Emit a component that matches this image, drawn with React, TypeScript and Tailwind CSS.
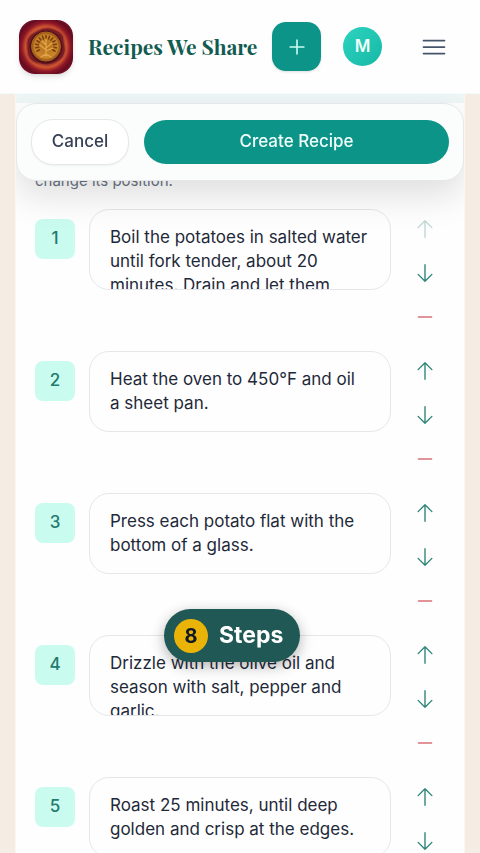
const steps = [
  "Boil the potatoes in salted water until fork tender, about 20 minutes. Drain and let them",
  "Heat the oven to 450°F and oil a sheet pan.",
  "Press each potato flat with the bottom of a glass.",
  "Drizzle with the olive oil and season with salt, pepper and garlic.",
  "Roast 25 minutes, until deep golden and crisp at the edges.",
];

const icons = {
  up: "M4.5 10.5 12 3m0 0 7.5 7.5M12 3v18",
  down: "M19.5 13.5 12 21m0 0-7.5-7.5M12 21V3",
  minus: "M5 12h14",
  plus: "M12 4.5v15m7.5-7.5h-15",
  menu: "M1.5 5.5h21M1.5 12h21M1.5 18.5h21",
};

function Icon({ name, width = 1.5, className = "size-[22px]" }: { name: keyof typeof icons; width?: number; className?: string }) {
  return (
    <svg viewBox="0 0 24 24" className={className} fill="none" stroke="currentColor" strokeWidth={width} strokeLinecap="round" strokeLinejoin="round" aria-hidden="true">
      <path d={icons[name]} />
    </svg>
  );
}

function Logo() {
  const rays = Array.from({ length: 13 }, (_, i) => {
    const a = (Math.PI * (i * 20 - 210)) / 180;
    return `M${27 + Math.cos(a) * 7.5} ${26 + Math.sin(a) * 7.5}L${27 + Math.cos(a) * 10.5} ${26 + Math.sin(a) * 10.5}`;
  });
  return (
    <svg viewBox="0 0 54 54" className="size-[54px] shrink-0 rounded-2xl shadow-md" aria-hidden="true">
      <defs>
        <radialGradient id="wax">
          <stop offset="0.45" stopColor="#7c1820" />
          <stop offset="0.7" stopColor="#d0572f" />
          <stop offset="0.84" stopColor="#8f1727" />
          <stop offset="1" stopColor="#5d0a20" />
        </radialGradient>
        <radialGradient id="coin">
          <stop offset="0" stopColor="#b5721d" />
          <stop offset="0.8" stopColor="#c98529" />
          <stop offset="1" stopColor="#8a4714" />
        </radialGradient>
      </defs>
      <rect width="54" height="54" fill="#700e23" />
      <circle cx="27" cy="27" r="29" fill="url(#wax)" />
      <path d="M27 8c5-1 8 1 12 3s6 5 6 9 2 7 1 12-4 8-8 10-6 4-12 3-9-1-13-4-5-7-5-11-1-8 1-12 5-5 9-7 5-3 9-3Z" fill="#7a1c24" stroke="#ad4034" strokeWidth="1.2" />
      <circle cx="27" cy="27" r="16.5" fill="#53121b" />
      <circle cx="27" cy="26.5" r="14.5" fill="url(#coin)" stroke="#b9721f" strokeWidth="0.8" />
      <path d={rays.join("")} stroke="#7c4010" strokeWidth="1.6" strokeLinecap="round" />
      <path d="M27 36V19M27 30l-6-5m6 3 6-5m-6 8 7-3M27 25l-4-4M22 37l5-3 5 3" stroke="#e2a548" strokeWidth="1.3" fill="none" strokeLinecap="round" />
    </svg>
  );
}

function Step({ index, text }: { index: number; text: string }) {
  return (
    <li className="flex items-start">
      <label
        htmlFor={`step-${index}`}
        className="mt-3 flex size-10 shrink-0 items-center justify-center rounded-lg bg-[#c9fbef] text-[17px] font-medium text-[#237a6e]"
      >
        {index}
      </label>
      <textarea
        id={`step-${index}`}
        defaultValue={text}
        className="mt-[2px] ml-[14px] h-[81px] min-w-0 flex-1 resize-none overflow-hidden rounded-[20px] border border-gray-200 bg-transparent py-[15px] pr-[22px] pl-5 text-[17px] leading-6 text-gray-800 outline-none"
      />
      <div className="ml-3 flex flex-col">
        <button
          className="flex size-11 items-center justify-center text-[#2f8579] disabled:opacity-30"
          aria-label={`Move step ${index} up`}
          disabled={index === 1}
        >
          <Icon name="up" />
        </button>
        <button className="flex size-11 items-center justify-center text-[#2f8579]" aria-label={`Move step ${index} down`}>
          <Icon name="down" />
        </button>
        <button className="flex size-11 items-center justify-center text-[#e29396]" aria-label={`Remove step ${index}`}>
          <Icon name="minus" width={2} />
        </button>
      </div>
    </li>
  );
}

export default function App() {
  return (
    <div className="flex h-screen flex-col overflow-hidden bg-[#f5ede4] font-[Inter,sans-serif]">
      <header className="z-20 flex h-[94px] shrink-0 items-center border-b border-teal-50 bg-[#fefefe] pr-6 pl-[19px]">
        <Logo />
        <h1 className="ml-[15px] font-['Playfair_Display','Liberation_Serif',serif] text-[21px] font-bold whitespace-nowrap text-[#125b50]">
          Recipes We Share
        </h1>
        <div className="ml-auto flex items-center">
          <button className="flex size-[49px] items-center justify-center rounded-[14px] bg-[#0d9488] text-teal-100 shadow-sm" aria-label="Add recipe">
            <Icon name="plus" width={1.75} />
          </button>
          <button
            className="ml-[22px] flex size-[39px] items-center justify-center rounded-full bg-linear-to-br from-[#2dd4bf] to-[#14b8a6] text-[17px] font-semibold text-teal-50"
            aria-label="Account"
          >
            M
          </button>
          <button className="ml-[30px] flex size-11 items-center justify-center text-slate-600" aria-label="Menu">
            <Icon name="menu" className="size-6" width={1.75} />
          </button>
        </div>
      </header>

      <main className="mx-[15px] min-h-0 flex-1 overflow-y-auto border-x border-[#f9f6f0] bg-[#fefefe] [scrollbar-width:none]">
        <div className="sticky top-0 z-10">
          <div className="h-[9px] bg-[#eef6f6]" />
          <div className="flex items-center gap-[15px] rounded-[20px] border border-gray-200 bg-[#fbfcfc] px-[14px] py-[15px] shadow-[0_14px_36px_rgba(0,0,0,0.13)]">
            <button className="h-[46px] w-[98px] shrink-0 rounded-[22px] border border-gray-200 bg-white text-[17px] font-medium text-gray-700 shadow-xs">
              Cancel
            </button>
            <button className="h-11 flex-1 rounded-[22px] bg-[#0d9488] text-[17px] font-medium text-teal-50">Create Recipe</button>
          </div>
        </div>
        <section className="pr-[17px] pl-[19px]">
          <p className="-mt-3 text-[15px] leading-6 text-gray-500">change its position.</p>
          <ol className="mt-[14px] flex flex-col gap-[10px]">
            {steps.map((text, i) => (
              <Step key={i} index={i + 1} text={text} />
            ))}
          </ol>
        </section>
      </main>

      <div
        role="status"
        className="fixed bottom-[191px] left-[164px] z-30 flex h-[53px] items-center gap-[11px] rounded-full bg-[#1f5854] pr-[17px] pl-[10px] text-[23px] font-bold text-white shadow-[0_4px_14px_rgba(0,0,0,0.3)]"
      >
        <span className="flex size-[34px] items-center justify-center rounded-full bg-[#eab308] text-xl text-gray-900">8</span>
        Steps
      </div>
    </div>
  );
}
